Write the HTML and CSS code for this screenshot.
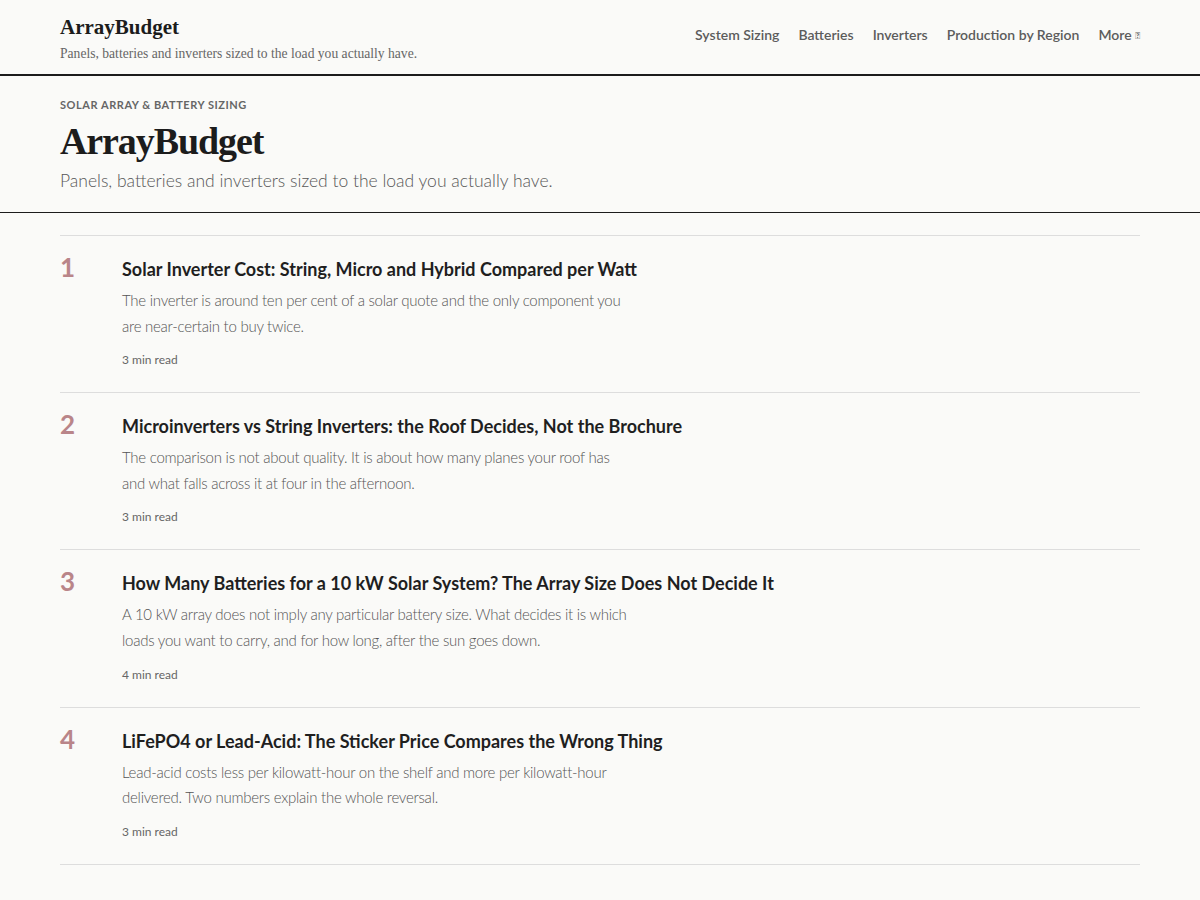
FILE: index.html
```html
<!DOCTYPE html>
<html lang="en">
<head>
    <meta charset="UTF-8">
    <meta name="viewport" content="width=device-width, initial-scale=1.0">
    <title>ArrayBudget</title>
    <link rel="stylesheet" href="styles.css">
</head>
<body>
    <header class="site-header">
        <div class="wrap header-row">
            <div class="brand-block">
                <a class="brand" href="#">ArrayBudget</a>
                <p class="tagline">Panels, batteries and inverters sized to the load you actually have.</p>
            </div>
            <nav class="main-nav">
                <a href="#">System Sizing</a>
                <a href="#">Batteries</a>
                <a href="#">Inverters</a>
                <a href="#">Production by Region</a>
                <a href="#" class="more">More <span class="more-icon">&#xe5cf;</span></a>
            </nav>
        </div>
    </header>

    <section class="hero">
        <div class="wrap">
            <p class="kicker">Solar Array &amp; Battery Sizing</p>
            <h1 class="hero-title">ArrayBudget</h1>
            <p class="hero-sub">Panels, batteries and inverters sized to the load you actually have.</p>
        </div>
    </section>

    <main class="wrap">
        <ol class="post-list">
            <li class="post">
                <span class="post-num">1</span>
                <div class="post-body">
                    <h2 class="post-title"><a href="#">Solar Inverter Cost: String, Micro and Hybrid Compared per Watt</a></h2>
                    <p class="post-desc">The inverter is around ten per cent of a solar quote and the only component you are near-certain to buy twice.</p>
                    <p class="post-meta">3 min read</p>
                </div>
            </li>
            <li class="post">
                <span class="post-num">2</span>
                <div class="post-body">
                    <h2 class="post-title"><a href="#">Microinverters vs String Inverters: the Roof Decides, Not the Brochure</a></h2>
                    <p class="post-desc">The comparison is not about quality. It is about how many planes your roof has and what falls across it at four in the afternoon.</p>
                    <p class="post-meta">3 min read</p>
                </div>
            </li>
            <li class="post">
                <span class="post-num">3</span>
                <div class="post-body">
                    <h2 class="post-title"><a href="#">How Many Batteries for a 10 kW Solar System? The Array Size Does Not Decide It</a></h2>
                    <p class="post-desc">A 10 kW array does not imply any particular battery size. What decides it is which loads you want to carry, and for how long, after the sun goes down.</p>
                    <p class="post-meta">4 min read</p>
                </div>
            </li>
            <li class="post">
                <span class="post-num">4</span>
                <div class="post-body">
                    <h2 class="post-title"><a href="#">LiFePO4 or Lead-Acid: The Sticker Price Compares the Wrong Thing</a></h2>
                    <p class="post-desc">Lead-acid costs less per kilowatt-hour on the shelf and more per kilowatt-hour delivered. Two numbers explain the whole reversal.</p>
                    <p class="post-meta">3 min read</p>
                </div>
            </li>
        </ol>
    </main>
</body>
</html>
```

FILE: styles.css
```css
/* Base */
body {
    margin: 0;
    background: #fafaf8;
    color: #222;
    font-family: 'Lato', 'Noto Sans', sans-serif;
}

a {
    color: inherit;
    text-decoration: none;
}

p, h1, h2, ol {
    margin: 0;
    padding: 0;
}

.wrap {
    max-width: 1080px;
    margin: 0 auto;
    padding: 0 60px;
}

/* Site header */
.site-header {
    border-bottom: 2px solid #1c1c1c;
    padding: 14px 0 10px;
}

.header-row {
    display: flex;
    justify-content: space-between;
    align-items: flex-start;
}

.brand {
    display: block;
    font-family: 'Liberation Serif', 'DejaVu Serif', serif;
    font-weight: 700;
    font-size: 21px;
    line-height: 26px;
    color: #1c1c1c;
}

.tagline {
    margin-top: 4px;
    font-family: 'Liberation Serif', 'DejaVu Serif', serif;
    font-size: 13.6px;
    line-height: 20px;
    color: #666;
}

.main-nav {
    display: flex;
    gap: 19px;
    margin-top: 12px;
    font-size: 14px;
    line-height: 18px;
    font-weight: 600;
    color: #5c5c5c;
}

.more-icon {
    font-size: 9px;
    vertical-align: 1px;
}

/* Hero */
.hero {
    border-bottom: 1px solid #1c1c1c;
    padding: 21px 0 18px;
}

.kicker {
    font-size: 11px;
    line-height: 16px;
    font-weight: 700;
    letter-spacing: 0.05em;
    text-transform: uppercase;
    color: #666;
}

.hero-title {
    margin-top: 4px;
    font-family: 'Liberation Serif', 'DejaVu Serif', serif;
    font-weight: 700;
    font-size: 38px;
    line-height: 48px;
    letter-spacing: -1.1px;
    color: #1c1c1c;
}

.hero-sub {
    margin-top: 3px;
    font-size: 17.5px;
    line-height: 26px;
    font-weight: 300;
    color: #575757;
}

/* Post list */
.post-list {
    list-style: none;
    margin-top: 22px;
    border-bottom: 1px solid #ddd;
}

.post {
    display: grid;
    grid-template-columns: 62px 1fr;
    border-top: 1px solid #ddd;
    padding: 21px 0 23px;
}

.post-num {
    font-size: 26px;
    line-height: 20px;
    font-weight: 700;
    color: #b98589;
}

.post-title {
    font-size: 18px;
    line-height: 24px;
    font-weight: 700;
    color: #1f1f1f;
}

.post-desc {
    margin-top: 7px;
    max-width: 512px;
    font-size: 15px;
    line-height: 25.6px;
    letter-spacing: -0.25px;
    font-weight: 300;
    color: #555;
}

.post-meta {
    margin-top: 12px;
    font-size: 12px;
    line-height: 18px;
    color: #666;
}
```
